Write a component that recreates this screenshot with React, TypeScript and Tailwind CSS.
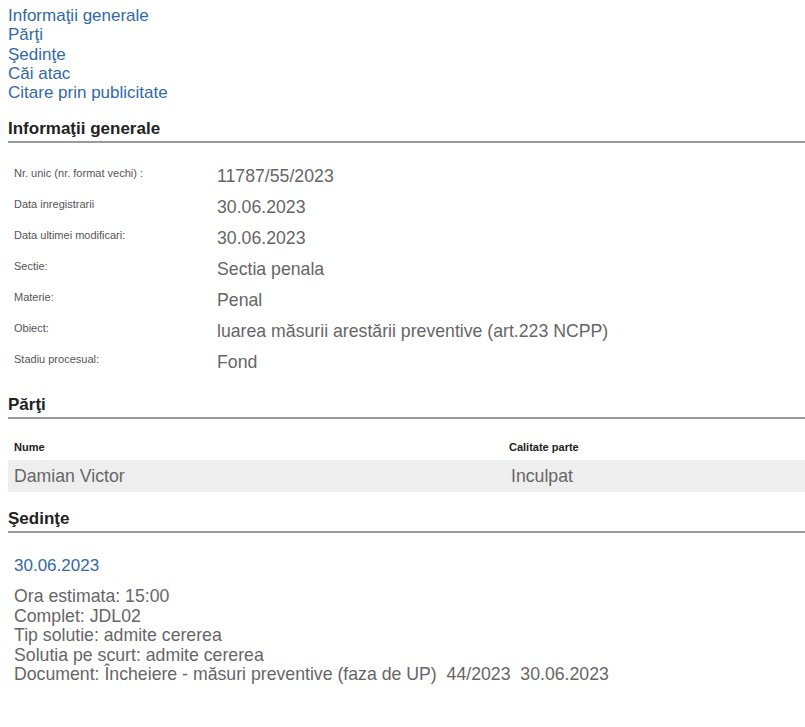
const navLinks = [
  "Informaţii generale",
  "Părţi",
  "Şedinţe",
  "Căi atac",
  "Citare prin publicitate",
];

const info = [
  { label: "Nr. unic (nr. format vechi) :", value: "11787/55/2023" },
  { label: "Data inregistrarii", value: "30.06.2023" },
  { label: "Data ultimei modificari:", value: "30.06.2023" },
  { label: "Sectie:", value: "Sectia penala" },
  { label: "Materie:", value: "Penal" },
  { label: "Obiect:", value: "luarea măsurii arestării preventive (art.223 NCPP)" },
  { label: "Stadiu procesual:", value: "Fond" },
];

const sedinta = [
  "Ora estimata: 15:00",
  "Complet: JDL02",
  "Tip solutie: admite cererea",
  "Solutia pe scurt: admite cererea",
  "Document: Încheiere - măsuri preventive (faza de UP)\u00a0\u00a044/2023\u00a0\u00a030.06.2023",
];

function SectionTitle({ children, className = "" }: { children: React.ReactNode; className?: string }) {
  return (
    <h2
      className={`border-b-2 border-[#9a9a9a] pb-[2px] text-[17px] leading-[20px] font-bold text-[#222] ${className}`}
    >
      {children}
    </h2>
  );
}

export default function App() {
  return (
    <div className="min-h-screen bg-white pl-2 pt-[6px] font-['Liberation_Sans',Arial,sans-serif]">
      {/* quick links */}
      <div className="flex flex-col text-[17px] leading-[19.3px] text-[#3369a6]">
        {navLinks.map((l) => (
          <a key={l} href="#" className="w-fit">
            {l}
          </a>
        ))}
      </div>

      <SectionTitle className="mt-[17px]">Informaţii generale</SectionTitle>
      <div className="mt-[18px] flex flex-col">
        {info.map((row) => (
          <div key={row.label} className="flex h-[31px]">
            <div className="w-[209px] shrink-0 pl-[6px] pt-[5px] text-[11px] leading-[14px] text-[#555]">
              {row.label}
            </div>
            <div className="pt-[5px] text-[17.7px] leading-[20px] text-[#666]">{row.value}</div>
          </div>
        ))}
      </div>

      <SectionTitle className="mt-[17px]">Părţi</SectionTitle>
      <div className="mt-[15px] flex h-[26px] items-center text-[11px] font-bold text-[#222]">
        <div className="w-[501px] shrink-0 pl-[6px]">Nume</div>
        <div>Calitate parte</div>
      </div>
      <div className="flex h-[32px] items-center bg-[#eeeeee] text-[17.7px] text-[#666]">
        <div className="w-[503px] shrink-0 pl-[6px]">Damian Victor</div>
        <div>Inculpat</div>
      </div>

      <SectionTitle className="mt-[17px]">Şedinţe</SectionTitle>
      <div className="pl-[6px]">
        <div className="mt-[23px] text-[17px] leading-[20px] text-[#3369a6]">30.06.2023</div>
        <div className="mt-[11px] flex flex-col text-[17.7px] leading-[19.5px] text-[#666]">
          {sedinta.map((s) => (
            <div key={s}>{s}</div>
          ))}
        </div>
      </div>
    </div>
  );
}
